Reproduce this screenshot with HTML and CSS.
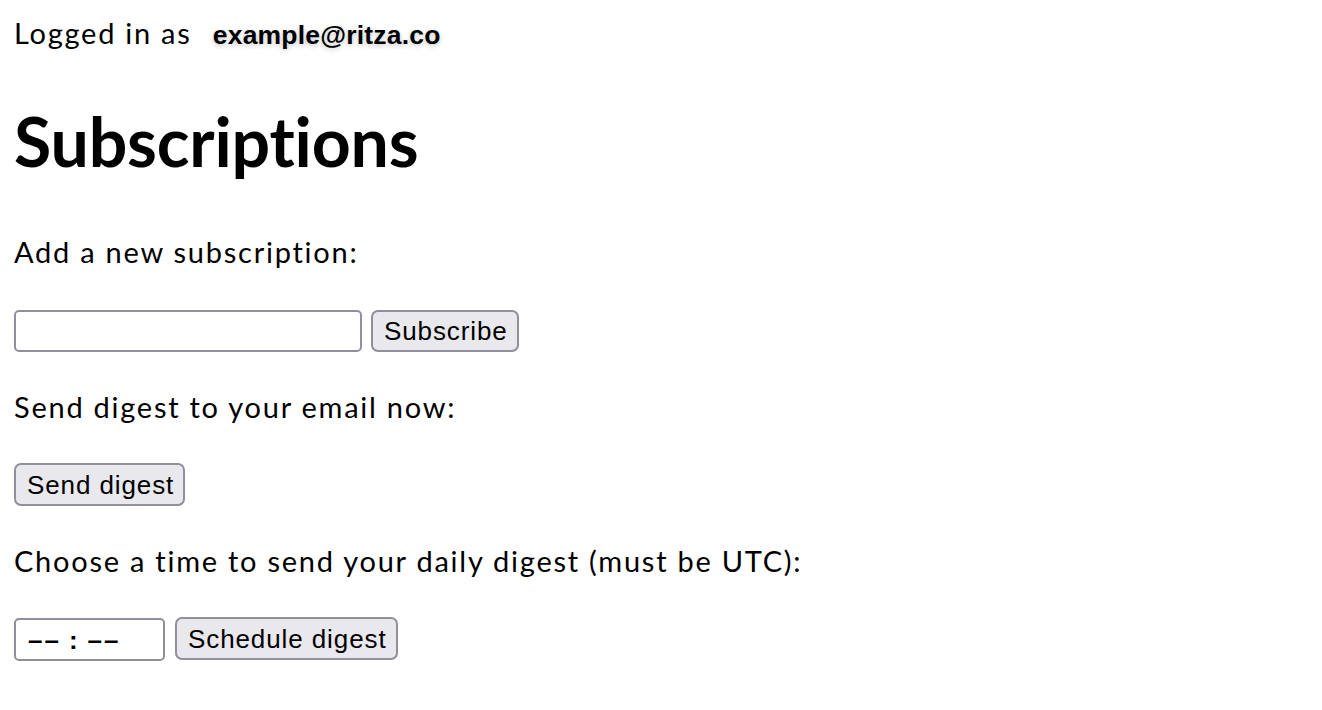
FILE: index.html
```html
<!DOCTYPE html>
<html lang="en">
<head>
<meta charset="utf-8">
<title>Subscriptions</title>
<link rel="stylesheet" href="styles.css">
</head>
<body>
<main class="page">
  <div class="login">Logged in as <strong class="email">example@ritza.co</strong></div>
  <h1 class="title">Subscriptions</h1>

  <p class="label label-first">Add a new subscription:</p>
  <form class="row row-subscribe">
    <input class="field field-url" type="text" aria-label="Feed URL">
    <button class="btn btn-subscribe" type="button">Subscribe</button>
  </form>

  <p class="label">Send digest to your email now:</p>
  <form class="row row-send">
    <button class="btn btn-send" type="button">Send digest</button>
  </form>

  <p class="label">Choose a time to send your daily digest (must be UTC):</p>
  <form class="row row-time">
    <div class="field field-time" role="textbox" aria-label="Time">
      <span class="seg">––</span><span class="colon">:</span><span class="seg seg-last">––</span>
    </div>
    <button class="btn btn-schedule" type="button">Schedule digest</button>
  </form>
</main>
</body>
</html>
```

FILE: styles.css
```css
html, body {
  margin: 0;
  padding: 0;
  background: #ffffff;
}

body {
  color: #000000;
  font-family: Lato, "Noto Sans", sans-serif;
  font-size: 29px;
  line-height: 38px;
}

.page {
  padding: 14px;
  display: flex;
  flex-direction: column;
  align-items: flex-start;
}

.login {
  height: 38px;
  letter-spacing: 1.75px;
}

.email {
  font-family: "Liberation Sans", Arial, sans-serif;
  font-weight: 700;
  font-size: 26.5px;
  line-height: 1;
  letter-spacing: 0.2px;
  margin-left: 12px;
  text-shadow: 0 2px 5px rgba(0, 0, 0, 0.22);
}

.title {
  margin: 55px 0 0;
  font-size: 68px;
  line-height: 68px;
  font-weight: 700;
  letter-spacing: -0.2px;
}

.label {
  margin: 36px 0 0;
  height: 38px;
  letter-spacing: 1.75px;
}

.label-first {
  margin-top: 58px;
}

.row {
  display: flex;
  align-items: flex-start;
  margin: 0;
}

.row-subscribe {
  margin-top: 39px;
  gap: 9px;
}

.row-send {
  margin-top: 37px;
}

.row-time {
  margin-top: 37px;
  gap: 10px;
}

.field {
  box-sizing: border-box;
  border: 2px solid #8f8f9d;
  border-radius: 5px;
  background: #ffffff;
  margin: 0;
  padding: 0 12px;
  font-family: "Liberation Sans", Arial, sans-serif;
  font-size: 26px;
  color: #000000;
}

.field-url {
  width: 348px;
  height: 42px;
  outline: none;
}

.field-time {
  width: 151px;
  height: 43px;
  margin-top: 1px;
  display: flex;
  align-items: center;
  padding-left: 12px;
}

.seg {
  letter-spacing: 2px;
  font-weight: 700;
  line-height: 1;
}

.colon {
  font-weight: 700;
  line-height: 1;
  margin-left: 8px;
  margin-right: 10px;
}

.btn {
  box-sizing: border-box;
  height: 42px;
  margin: 0;
  padding: 0 11px;
  border: 2px solid #8f8f9d;
  border-radius: 7px;
  background: #e9e9ed;
  color: #000000;
  font-family: "Liberation Sans", Arial, sans-serif;
  font-size: 26px;
  line-height: 1;
  letter-spacing: 0.9px;
  white-space: nowrap;
}

.btn-subscribe {
  width: 148px;
}

.btn-send {
  width: 171px;
  height: 43px;
}

.btn-schedule {
  width: 223px;
  height: 43px;
}
```
